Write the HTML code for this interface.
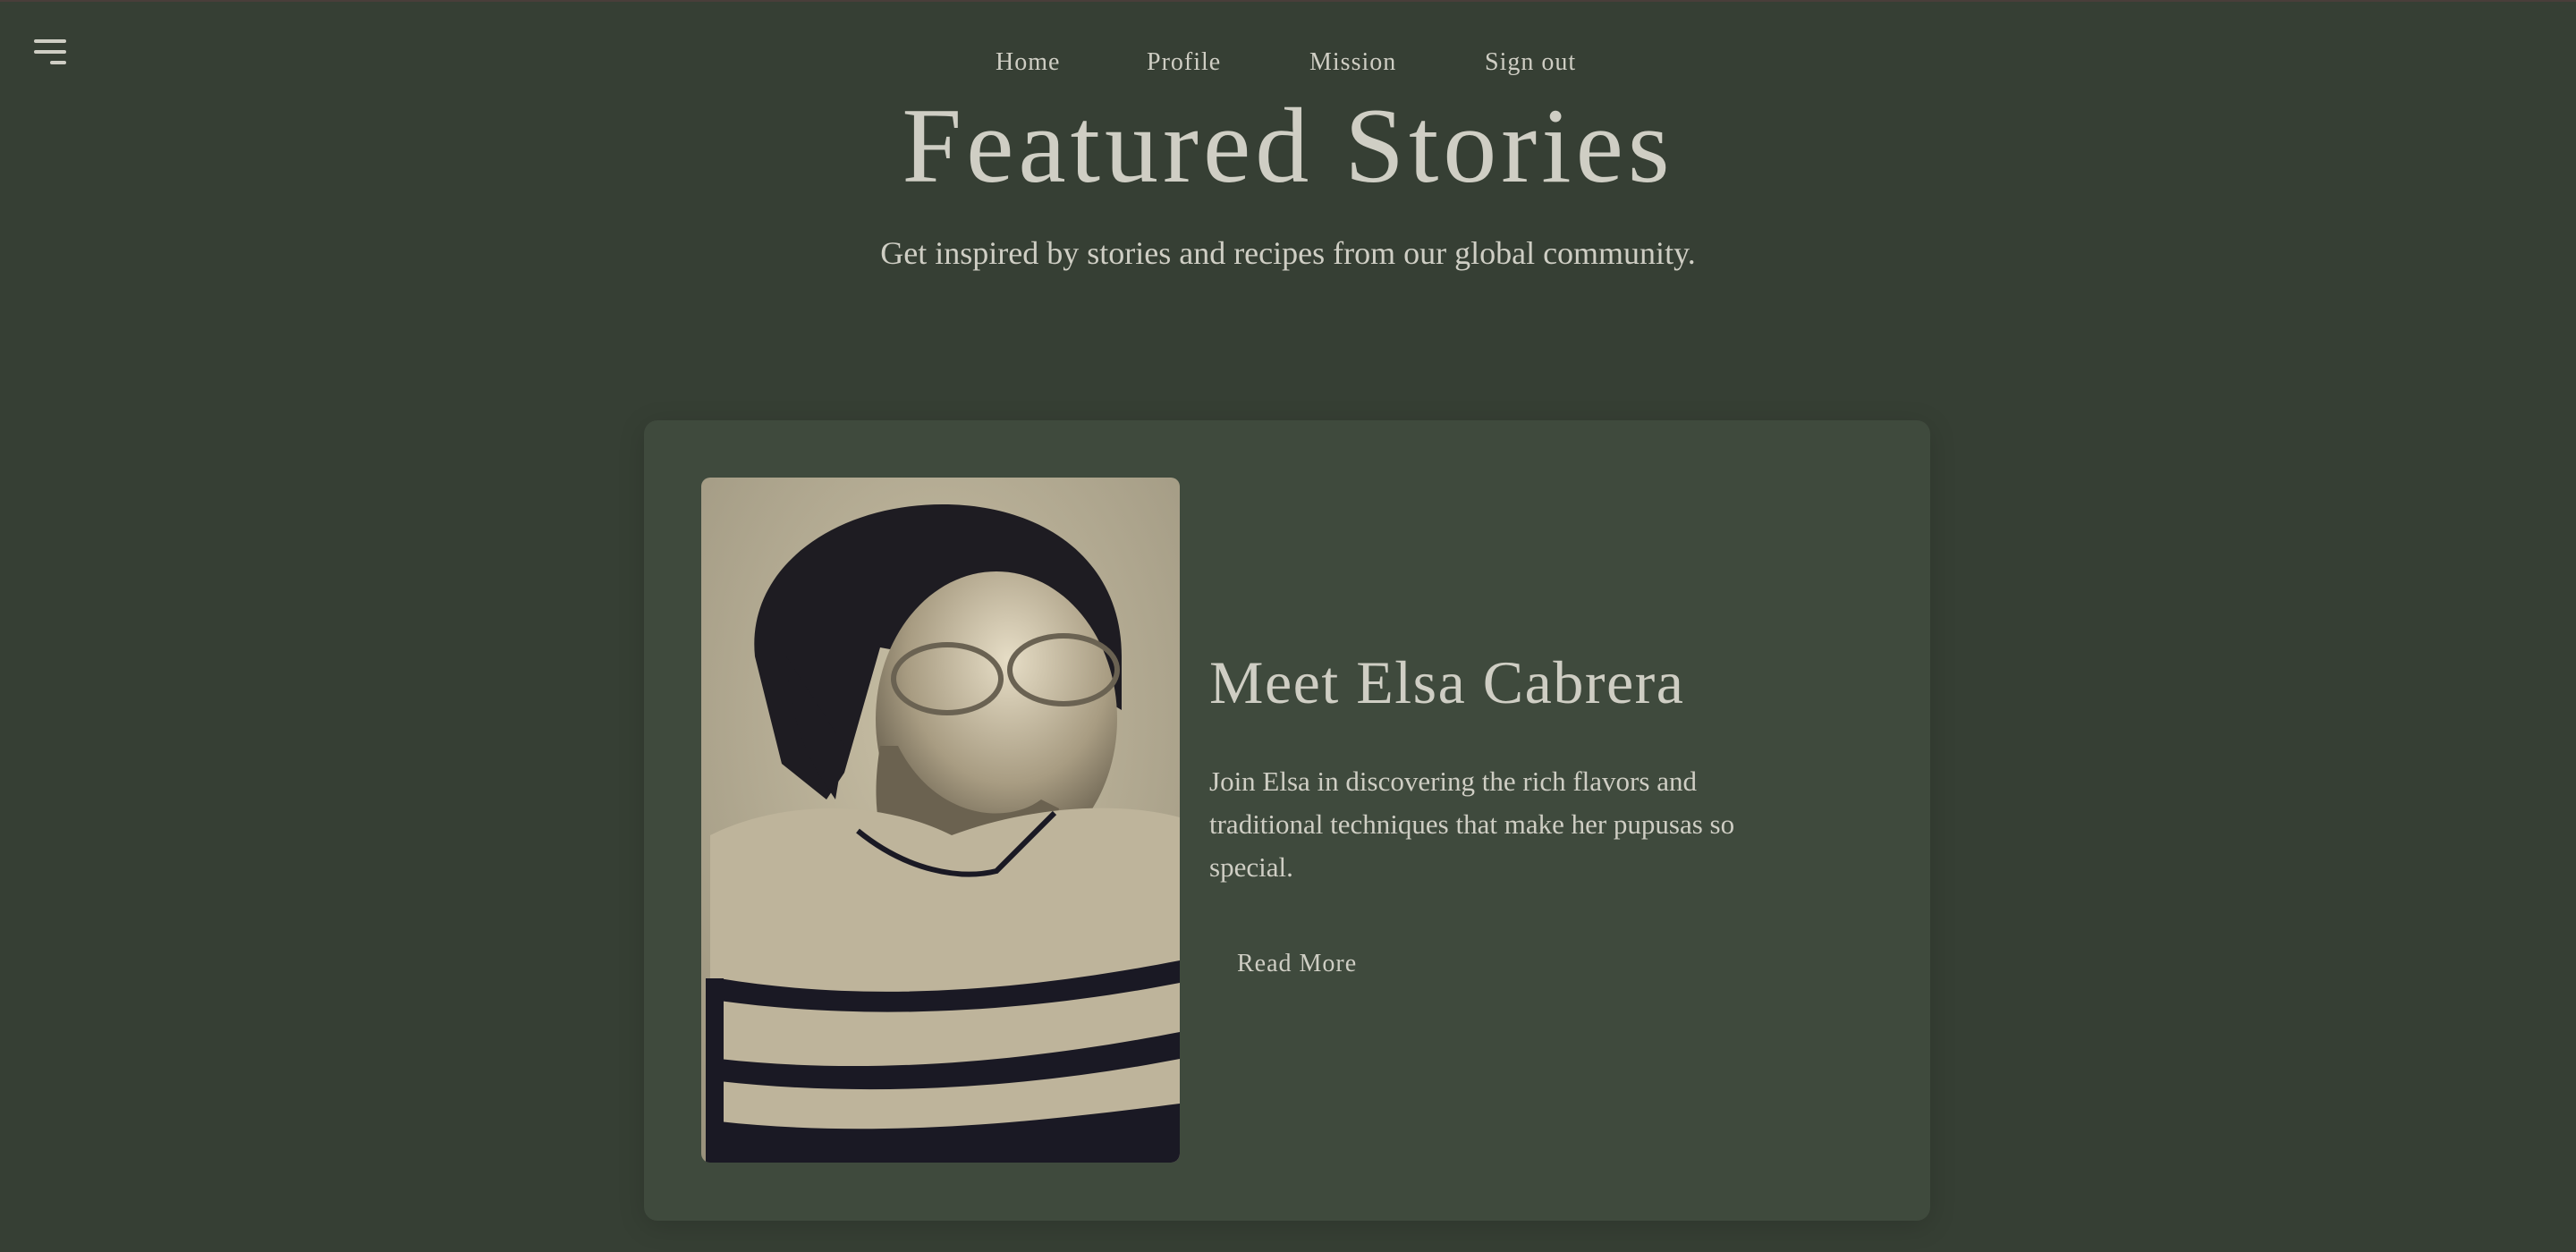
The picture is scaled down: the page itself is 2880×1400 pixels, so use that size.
<!DOCTYPE html>
<html><head><meta charset="utf-8"><style>
html,body{margin:0;padding:0;width:2880px;height:1400px;overflow:hidden;background:#363f34;font-family:"Liberation Serif",serif;color:#cfcec4}
.top{position:absolute;left:0;top:0;width:2880px;height:2px;background:#4a3e3a}
.ham span{position:absolute;height:4px;background:#cfcec4;border-radius:2px}
.nav a{position:absolute;top:50px;font-size:28px;letter-spacing:1px;color:#cfcec4;text-decoration:none;line-height:40px}
h1{position:absolute;left:0;width:2880px;top:88px;margin:0;text-align:center;font-weight:normal;font-size:120px;letter-spacing:5px;line-height:150px;color:#cfcec4}
.sub{position:absolute;left:0;width:2880px;top:258px;text-align:center;font-size:36px;line-height:50px}
.card{position:absolute;left:720px;top:470px;width:1438px;height:895px;background:#3f4a3d;border-radius:15px;box-shadow:0 6px 30px rgba(0,0,0,.15)}
.photo{position:absolute;left:784px;top:534px;width:535px;height:766px;border-radius:10px;overflow:hidden}
h2{position:absolute;left:1352px;top:718px;margin:0;font-weight:normal;font-size:68px;letter-spacing:1.5px;line-height:90px;color:#cfcec4}
.p{position:absolute;left:1352px;top:850px;width:640px;font-size:31px;line-height:48px}
.rm{position:absolute;left:1383px;top:1058px;font-size:28px;letter-spacing:1px;line-height:40px}
</style></head><body>
<div class="top"></div>
<div class="ham"><span style="left:38px;top:44px;width:36px"></span><span style="left:38px;top:56px;width:36px"></span><span style="left:56px;top:68px;width:18px"></span></div>
<div class="nav"><a style="left:1113px">Home</a><a style="left:1282px">Profile</a><a style="left:1464px">Mission</a><a style="left:1660px">Sign out</a></div>
<h1>Featured Stories</h1>
<div class="sub">Get inspired by stories and recipes from our global community.</div>
<div class="card"></div>
<div class="photo"><svg width="535" height="766" viewBox="0 0 535 766">
<defs><radialGradient id="bg" cx="0.5" cy="0.35" r="0.8"><stop offset="0" stop-color="#c9c0a6"/><stop offset="1" stop-color="#9a927c"/></radialGradient>
<radialGradient id="face" cx="0.55" cy="0.3" r="0.7"><stop offset="0" stop-color="#e6ddc6"/><stop offset="0.6" stop-color="#a89c82"/><stop offset="1" stop-color="#5e5646"/></radialGradient></defs>
<rect width="535" height="766" fill="url(#bg)"/>
<path d="M60 200 C50 100 150 30 270 30 C380 30 470 90 470 200 L470 260 L420 230 L200 190 L160 330 L140 360 L90 320 Z" fill="#1e1c22"/>
<path d="M95 200 C100 290 130 330 150 360 L160 300 Z" fill="#1e1c22"/>
<ellipse cx="330" cy="270" rx="135" ry="165" fill="url(#face)"/>
<path d="M200 300 C180 420 230 470 280 470 C340 480 390 420 400 370 L380 360 C340 390 260 380 220 300 Z" fill="#6b6250"/>
<ellipse cx="275" cy="225" rx="60" ry="38" fill="none" stroke="#6a6252" stroke-width="6"/>
<ellipse cx="405" cy="215" rx="60" ry="38" fill="none" stroke="#6a6252" stroke-width="6"/>
<path d="M10 400 C90 360 200 360 280 400 C360 370 460 360 535 380 L535 766 L10 766 Z" fill="#beb49b"/>
<path d="M5 560 L25 560 L25 766 L5 766Z" fill="#1a1924"/>
<path d="M20 560 C200 590 380 570 535 540 L535 565 C380 595 200 610 20 585Z" fill="#1a1924"/>
<path d="M20 650 C200 670 380 650 535 620 L535 650 C380 680 200 695 20 675Z" fill="#1a1924"/>
<path d="M20 720 C200 740 380 720 535 700 L535 766 L20 766Z" fill="#1a1924"/>
<path d="M175 395 C230 440 290 450 330 440 L395 375" fill="none" stroke="#1a1924" stroke-width="6"/>
</svg></div>
<h2>Meet Elsa Cabrera</h2>
<div class="p">Join Elsa in discovering the rich flavors and traditional techniques that make her pupusas so special.</div>
<div class="rm">Read More</div>
</body></html>
